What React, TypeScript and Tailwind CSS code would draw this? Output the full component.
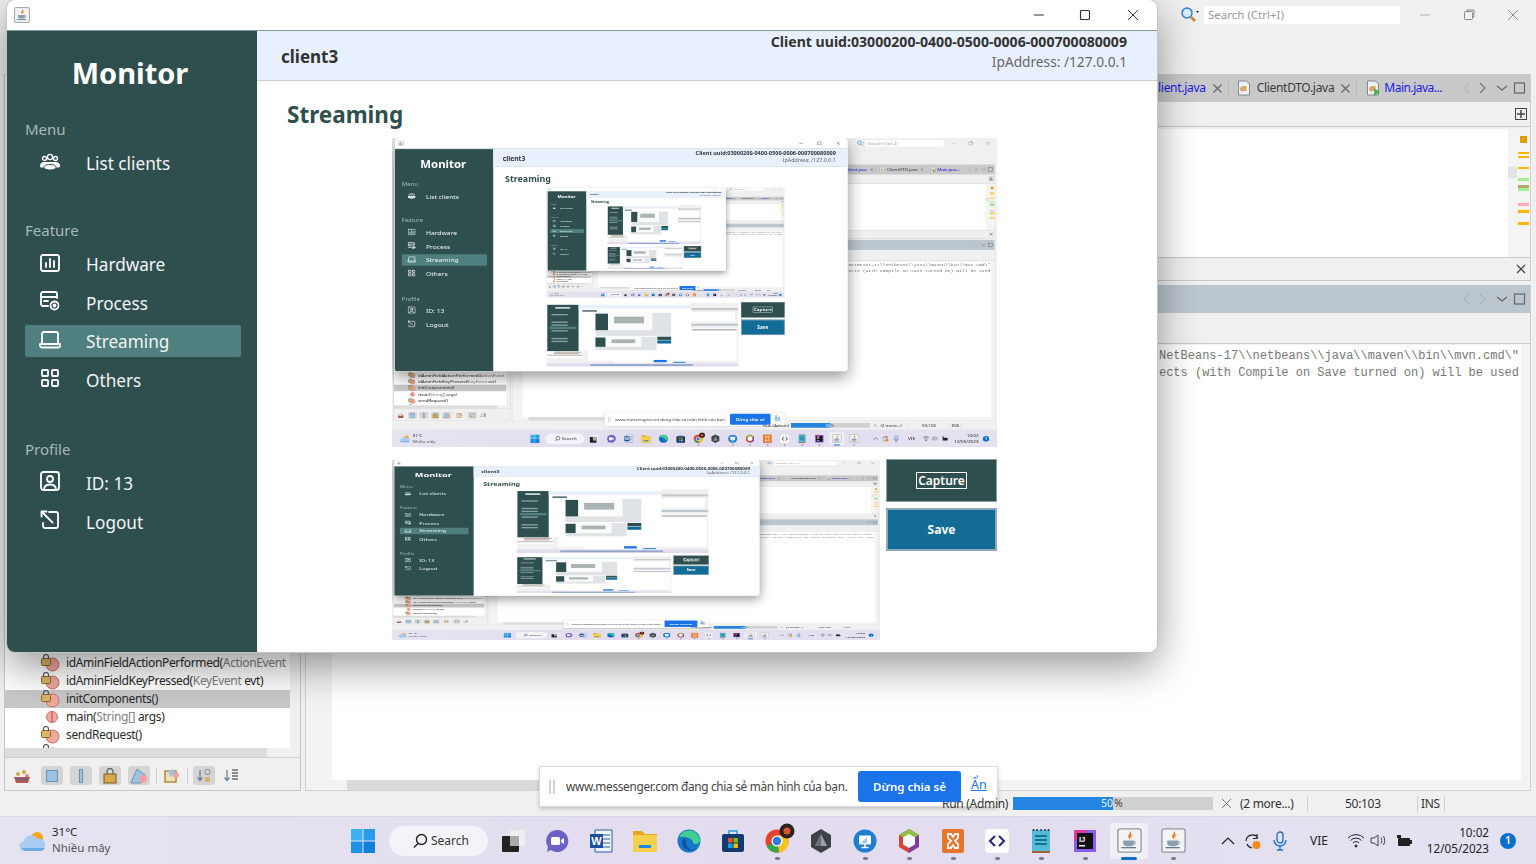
import React from "react";

const MIN_TEXT_SCALE = 0.1;

function JavaIcon({ size = 28 }: { size?: number }) {
  return (
    <svg width={size} height={size} viewBox="0 0 28 28">
      <rect x="1" y="1" width="26" height="26" rx="2.5" fill="#f3f3f3" stroke="#8e9aa3" strokeWidth="1.5" />
      <path d="M14 4c2 3-3 4-1 7 .5 1 1.500 1.500 1.500 1.500-1-2 3.500-3.500.5-8.500z" fill="#e8761e" />
      <path d="M17 7c0 2-2 3-1.500 5.500" stroke="#e8a03c" strokeWidth="1" fill="none" />
      <path d="M7 14h12v3.500c0 1.500-2 3-6 3s-6-1.500-6-3z" fill="#8aa0ae" />
      <path d="M19 15c2.500 0 2.500 3-1 3.500" stroke="#6f8794" strokeWidth="1" fill="none" />
      <path d="M5 22h16" stroke="#5b7b8f" strokeWidth="1.500" />
    </svg>
  );
}

function LockDot() {
  return (
    <svg width="20" height="18" viewBox="0 0 20 18" className="shrink-0">
      <circle cx="12.500" cy="10.500" r="6.500" fill="#f0a8a0" stroke="#cf6f68" />
      <rect x="1.500" y="4.500" width="9" height="7" rx="1" fill="#dcb56a" stroke="#8a6a2a" />
      <path d="M3.500 4.500V3a2.500 2.500 0 0 1 5 0v1.500" fill="none" stroke="#555" strokeWidth="1.200" />
    </svg>
  );
}

function MainDot() {
  return (
    <svg width="20" height="18" viewBox="0 0 20 18" className="shrink-0">
      <circle cx="12" cy="9" r="5.500" fill="#f0a8a0" stroke="#cf6f68" />
      <path d="M12 3.500v11" stroke="#c05850" strokeWidth="1.200" />
    </svg>
  );
}

function FileIcon({ run = false }: { run?: boolean }) {
  return (
    <svg width="16" height="16" viewBox="0 0 16 16" className="shrink-0">
      <path d="M2.500 1h8l3 3v11h-11z" fill="#eef1f4" stroke="#7d8791" />
      <circle cx="6.500" cy="9" r="2.500" fill="#e79a8f" />
      <rect x="6.500" y="6" width="4" height="5" fill="#d7ac5a" />
      {run && <path d="M9 8l6 4-6 4z" fill="#4fae4f" />}
    </svg>
  );
}

function TabX() {
  return (
    <svg width="9" height="9" viewBox="0 0 9 9" stroke="#666" strokeWidth="1.200" className="shrink-0">
      <path d="m.5.5 8 8M8.500.5l-8 8" />
    </svg>
  );
}

function Chevrons({ dim }: { dim: boolean }) {
  return (
    <svg width="72" height="16" viewBox="0 0 72 16" fill="none" strokeWidth="1.200">
      <path d="M9 3 4 8l5 5" stroke={dim ? "#aab4bd" : "#b4b4b4"} />
      <path d="M20 3l5 5-5 5" stroke={dim ? "#aab4bd" : "#777"} />
      <path d="m37 6 5 4 5-4" stroke="#666" />
      <rect x="54.500" y="3" width="10" height="10" stroke="#666" />
    </svg>
  );
}

function Ide() {
  const rows: [React.ReactNode, string, string, string, boolean][] = [
    [<LockDot key="a" />, "idAminFieldActionPerformed(", "ActionEvent", "", false],
    [<LockDot key="b" />, "idAminFieldKeyPressed(", "KeyEvent", " evt)", false],
    [<LockDot key="c" />, "initComponents()", "", "", true],
    [<MainDot key="d" />, "main(", "String[]", " args)", false],
    [<LockDot key="e" />, "sendRequest()", "", "", false],
    [<LockDot key="f" />, "", "", "", false],
  ];
  return (
    <div className="flex-1 min-h-0 flex flex-col bg-[#f0f0f0]">
      <div className="h-[74px] shrink-0 flex justify-end items-start">
        <div className="mt-[6px] flex items-center">
          <svg width="20" height="18" viewBox="0 0 20 18" fill="none">
            <circle cx="7" cy="7" r="5" fill="#d8ecff" stroke="#2f80d0" strokeWidth="1.500" />
            <path d="m11 11 4 4" stroke="#d08820" strokeWidth="2.500" />
            <path d="m16 5 3 0-1.500 2z" fill="#222" />
          </svg>
          <div className="ml-[4px] w-[196px] h-[18px] bg-white pl-[4px] text-[11.500px] leading-[18px] text-[#9a9a9a]">Search (Ctrl+I)</div>
        </div>
        <div className="w-[136px] pt-[8px] flex">
          <svg className="ml-[18px]" width="14" height="14" viewBox="0 0 14 14" stroke="#b0b0b0" fill="none"><path d="M2 7h10" /></svg>
          <svg className="ml-[30px]" width="14" height="14" viewBox="0 0 14 14" stroke="#888" fill="none"><rect x="2.500" y="3.500" width="8" height="8" rx="1" /><path d="M5 3.500V2h7v7h-1.500" /></svg>
          <svg className="ml-[30px]" width="14" height="14" viewBox="0 0 14 14" stroke="#888" fill="none"><path d="m2 2 10 10M12 2 2 12" /></svg>
        </div>
      </div>
      <div className="flex-1 min-h-0 flex pl-[4px] pr-[5px]">
        <div className="w-[297px] shrink-0 border border-[#c8c8c8] flex flex-col min-h-0">
          <div className="flex-1 min-h-0 overflow-hidden bg-white pt-[579px] mr-[10px] text-[12px] tracking-[-0.35px] text-[#2b2b2b]">
            {rows.map((r, i) => (
              <div key={i} className={`h-[18px] flex items-center pl-[35px] gap-[6px] whitespace-nowrap ${r[4] ? "bg-[#c8c8c8]" : ""}`}>
                {r[0]}
                {r[1] && <span>{r[1]}<span className="text-[#808080]">{r[2]}</span>{r[3]}</span>}
              </div>
            ))}
          </div>
          <div className="h-[9px] shrink-0 bg-[#f0f0f0]"><div className="h-full w-[262px] bg-[#dcdcdc]" /></div>
          <div className="h-[33px] shrink-0 border-t border-[#d0d0d0] flex items-center pl-[8px] pt-[3px] bg-[#f0f0f0]">
            <svg width="18" height="18" viewBox="0 0 18 18"><circle cx="5" cy="7" r="2" fill="#d9a74a" /><circle cx="11" cy="5" r="2" fill="#d9a74a" /><circle cx="14" cy="9" r="2" fill="#e08a80" /><path d="M1 10h16l-2 6H3z" fill="#b25a50" /><path d="M3 12h12" stroke="#3b6ea8" /></svg>
            <div className="ml-[10px] w-[22px] h-[19px] bg-[#d4d4d4] rounded-[3px] flex items-center justify-center"><div className="w-[12px] h-[12px] bg-[#9cc4e6] border border-[#6a8fb0]" /></div>
            <div className="ml-[7px] w-[22px] h-[19px] bg-[#d4d4d4] rounded-[3px] flex items-center justify-center"><div className="w-[4px] h-[14px] bg-[#9cc4e6] border border-[#6a8fb0]" /></div>
            <div className="ml-[7px] w-[22px] h-[19px] bg-[#d4d4d4] rounded-[3px] flex items-center justify-center">
              <svg width="16" height="16" viewBox="0 0 16 16"><rect x="2" y="6" width="12" height="9" fill="#d9a74a" stroke="#7a5a20" /><path d="M5 6V3.500a3 3 0 0 1 6 0V6" fill="none" stroke="#666" strokeWidth="1.300" /></svg>
            </div>
            <div className="ml-[7px] w-[22px] h-[19px] bg-[#d4d4d4] rounded-[3px] flex items-center justify-center">
              <svg width="18" height="16" viewBox="0 0 18 16"><path d="M7 1 15 7l-4 8H1z" fill="#9cc4e6" stroke="#6a8fb0" /><circle cx="13" cy="11" r="4" fill="#f0a0a0" /></svg>
            </div>
            <div className="ml-[6px] w-px h-[16px] bg-[#cfcfcf]" />
            <svg className="ml-[6px]" width="18" height="16" viewBox="0 0 18 16"><rect x="2" y="3" width="11" height="11" fill="#f0e0b0" stroke="#b08a3a" strokeWidth="1.500" /><path d="M5 3 10 1l3 5-6 3z" fill="#9cc4e6" /><circle cx="13" cy="7" r="3" fill="#f0a0a0" /></svg>
            <div className="ml-[6px] w-px h-[16px] bg-[#cfcfcf]" />
            <div className="ml-[5px] w-[22px] h-[19px] bg-[#d4d4d4] rounded-[3px] flex items-center justify-center">
              <svg width="16" height="16" viewBox="0 0 16 16" fill="none"><path d="M4 2v10M1.500 9.500 4 12.500l2.500-3" stroke="#6a8297" strokeWidth="1.300" /><rect x="9" y="1.500" width="5" height="5" rx="2" stroke="#7a8a98" /><rect x="9" y="9" width="5" height="5" fill="#d9b36a" /></svg>
            </div>
            <svg className="ml-[7px]" width="18" height="16" viewBox="0 0 18 16" fill="none"><path d="M5 2v10M2.500 9.500 5 12.500l2.500-3" stroke="#6a8297" strokeWidth="1.300" /><path d="M10 2h6M10 5h6M10 8h6M10 11h6" stroke="#8c8c8c" strokeWidth="2" /></svg>
          </div>
        </div>
        <div className="ml-[4px] flex-1 min-w-0 flex flex-col">
          <div className="shrink-0 border-x border-[#d0d0d0]">
            <div className="h-[28px] bg-[#c9c9c9] flex items-center justify-end text-[12px] tracking-[-0.3px] whitespace-nowrap">
              <span className="text-[#1a1ae8]">Client.java</span>
              <span className="ml-[7px] flex"><TabX /></span>
              <span className="ml-[6px] mr-[7px] w-px h-[20px] bg-[#bbbbbb]" />
              <FileIcon />
              <span className="ml-[5px] text-[#3a3a3a]">ClientDTO.java</span>
              <span className="ml-[7px] flex"><TabX /></span>
              <span className="ml-[6px] mr-[8px] w-px h-[20px] bg-[#bbbbbb]" />
              <FileIcon run />
              <span className="ml-[3px] text-[#1a1ae8] tracking-[-0.5px]">Main.java...</span>
              <span className="ml-[18px] -mr-[2px] flex"><Chevrons dim={false} /></span>
            </div>
            <div className="h-[25px] border-b border-[#c8c8c8] flex items-center justify-end pr-[3px]">
              <svg width="12" height="12" viewBox="0 0 12 12" fill="none" stroke="#444"><rect x=".5" y=".5" width="11" height="11" /><path d="M6 2v8M2 6h8" strokeWidth="1.500" /></svg>
            </div>
            <div className="h-[128px] mt-[2px] bg-[#f4f4f4] flex">
              <div className="flex-1 bg-white" />
              <div className="w-[22px] relative">
                <div className="absolute left-0 top-[38px] w-[9px] h-[11px] bg-[#e3e3e3]" />
                <div className="ml-[12px] mt-[7px] w-[7px] h-[7px] bg-[#e0a000]" />
                <div className="ml-[10px] mt-[9px] w-[11px] h-[2px] bg-[#ffb400]" />
                <div className="ml-[10px] mt-[2px] w-[11px] h-[2px] bg-[#ffb400]" />
                <div className="ml-[10px] mt-[9px] w-[11px] h-[2px] bg-[#ffb400]" />
                <div className="ml-[10px] mt-[9px] w-[11px] h-[3px] bg-[#a0f090]" />
                <div className="ml-[10px] mt-[4px] w-[11px] h-[3px] bg-[#b0a870]" />
                <div className="ml-[10px] w-[11px] h-[3px] bg-[#a0f090]" />
                <div className="ml-[10px] mt-[12px] w-[11px] h-[3px] bg-[#ffa8b8]" />
                <div className="ml-[10px] mt-[4px] w-[11px] h-[3px] bg-[#ffb400]" />
                <div className="ml-[10px] mt-[9px] w-[11px] h-[3px] bg-[#ffb400]" />
              </div>
            </div>
            <div className="h-[24px] border-y border-[#c8c8c8] flex items-center justify-end pr-[3px]">
              <svg width="12" height="12" viewBox="0 0 12 12" stroke="#444" strokeWidth="1.300"><path d="m2 2 8 8M10 2l-8 8" /></svg>
            </div>
          </div>
          <div className="mt-[4px] flex-1 min-h-0 flex flex-col border-x border-b border-[#d0d0d0]">
            <div className="h-[28px] shrink-0 bg-[#bcc6cf] flex items-center justify-end"><span className="-mr-[2px] flex"><Chevrons dim /></span></div>
            <div className="h-[31px] shrink-0 border-b border-[#c8c8c8]" />
            <div className="flex-1 min-h-0 pl-[26px] pr-[9px] bg-[#f3f3f3]">
              <div className="h-full mt-[1px] bg-white overflow-hidden flex flex-col items-end pt-[3px] pr-[2px] font-['Liberation_Mono',monospace] text-[12px] leading-[17px] text-[#777777] whitespace-pre">
                <div>{"C:\\\\Program Files\\\\NetBeans-17\\\\netbeans\\\\java\\\\maven\\\\bin\\\\mvn.cmd\\\""}</div>
                <div>{"for Maven projects (with Compile on Save turned on) will be used"}</div>
              </div>
            </div>
            <div className="h-[10px] shrink-0 flex bg-[#f3f3f3]">
              <div className="ml-[41px] w-[500px] bg-[#dadada]" />
            </div>
          </div>
        </div>
      </div>
      <div className="h-[25px] shrink-0 flex items-center text-[12px] text-[#333] whitespace-nowrap">
        <div className="w-[942px] shrink-0" />
        <div className="relative z-10 w-[66px] shrink-0 text-right tracking-[-0.3px]">Run (Admin)</div>
        <div className="ml-[5px] w-[200px] h-[13px] shrink-0 bg-[#d0d0d0] flex text-[10.500px] leading-[13px]">
          <div className="w-[100px] h-full bg-[#2585e0] text-right text-[#e8f2fc]">50</div>
          <div className="pl-[1px] text-[#444444]">%</div>
        </div>
        <svg className="ml-[9px]" width="9" height="9" viewBox="0 0 9 9" stroke="#777"><path d="m0 0 9 9M9 0 0 9" /></svg>
        <span className="ml-[9px] w-[54px] tracking-[-0.3px]">(2 more...)</span>
        <span className="ml-[13px] w-px h-[16px] bg-[#d0d0d0]" />
        <span className="ml-[37px] w-[35px] tracking-[-0.3px]">50:103</span>
        <span className="ml-[37px] w-px h-[16px] bg-[#d0d0d0]" />
        <span className="ml-[3px] w-[20px] tracking-[-0.3px]">INS</span>
        <span className="ml-[3px] w-px h-[16px] bg-[#d0d0d0]" />
      </div>
    </div>
  );
}

const Cell = ({ children, dot, active }: { children: React.ReactNode; dot?: boolean; active?: boolean }) => (
  <div className="w-[44px] h-[48px] shrink-0 flex flex-col items-center justify-center relative">
    {active && <div className="absolute left-[3px] right-[3px] top-[6px] bottom-[6px] bg-[#f0eef7] rounded-[4px]" />}
    <div className="relative flex">{children}</div>
    {dot && <div className="absolute bottom-[5px] w-[5px] h-[3px] rounded-full bg-[#7c7c84]" />}
    {active && <div className="absolute bottom-[5px] w-[16px] h-[3px] rounded-full bg-[#0a6fd0]" />}
  </div>
);

function Taskbar() {
  return (
    <div className="h-[48px] shrink-0 flex items-center bg-gradient-to-r from-[#e6e3f0] via-[#e2dcee] to-[#e4e2f1] border-t border-[#d8d6e2]">
      <div className="w-[341px] shrink-0 flex items-center pl-[19px]">
        <svg width="28" height="24" viewBox="0 0 28 24">
          <circle cx="18" cy="9" r="6" fill="#f5a623" />
          <path d="M6 22a5 5 0 0 1-1-10 7 7 0 0 1 13-2 6 6 0 0 1 4 12z" fill="#a9cdf2" />
          <path d="M6 22a4 4 0 0 1-3-3h23a5 5 0 0 1-4 3z" fill="#6fa8e6" />
        </svg>
        <div className="ml-[5px] text-[11.500px] leading-[16px] -mt-[1px]">
          <div className="text-[#222]">31°C</div>
          <div className="text-[#555]">Nhiều mây</div>
        </div>
      </div>
      <Cell>
        <svg width="24" height="24" viewBox="0 0 24 24"><rect x="0" y="0" width="11.500" height="11.500" fill="#3bb2f2" /><rect x="12.500" y="0" width="11.500" height="11.500" fill="#2a9be8" /><rect x="0" y="12.500" width="11.500" height="11.500" fill="#1e90e6" /><rect x="12.500" y="12.500" width="11.500" height="11.500" fill="#1080d8" /></svg>
      </Cell>
      <div className="ml-[4px] w-[99px] h-[30px] rounded-full bg-[#f5f3fa] flex items-center pl-[23px] text-[12px] text-[#333] shrink-0">
        <svg width="16" height="16" viewBox="0 0 16 16" fill="none" stroke="#222" strokeWidth="1.400"><circle cx="9.500" cy="6.500" r="5" /><path d="m6 10.500-4 4" /></svg>
        <span className="ml-[3px]">Search</span>
      </div>
      <div className="ml-[3px] flex">
        <Cell>
          <svg width="24" height="24" viewBox="0 0 24 24"><rect x="9" y="1" width="15" height="16" rx="1" fill="#eeeeee" /><rect x="1" y="7" width="17" height="16" rx="1" fill="#222" /><rect x="9" y="7" width="9" height="10" fill="#aaaaaa" /></svg>
        </Cell>
        <Cell>
          <svg width="24" height="24" viewBox="0 0 24 24"><path d="M12 1a11 11 0 1 1-6 20l-4 2 1-5A11 11 0 0 1 12 1z" fill="#6b62c6" /><rect x="6" y="8" width="9" height="8" rx="1.500" fill="#fff" /><path d="m16 11 3-2v6l-3-2z" fill="#fff" /></svg>
        </Cell>
        <Cell>
          <svg width="24" height="24" viewBox="0 0 24 24"><path d="M6 1h17v22H6z" fill="#eef3fb" stroke="#2b5fa8" /><path d="M14 6h7M14 10h7M14 14h7M14 18h7" stroke="#2b5fa8" /><rect x="1" y="5" width="13" height="14" fill="#1c4f9c" /><text x="7.500" y="16" fontSize="11" fontWeight="700" fill="#fff" textAnchor="middle" fontFamily="Liberation Sans">W</text></svg>
        </Cell>
        <Cell>
          <svg width="24" height="24" viewBox="0 0 24 24"><path d="M0 2h9l3 3h12v18H0z" fill="#e5a71f" /><rect x="0" y="6" width="24" height="17" fill="#f6d04d" /><rect x="6" y="16" width="12" height="3" fill="#1e88e5" /></svg>
        </Cell>
        <Cell>
          <svg width="24" height="24" viewBox="0 0 24 24"><circle cx="12" cy="12" r="11.500" fill="#1578c9" /><path d="M2 8a11 11 0 0 1 21 3c0 4-5 5-7 3 1-5-9-7-14-6z" fill="#3fcf8e" /><path d="M9 14c0 5 5 8 10 6-5 3-13 1-14-6 0-2 1-4 4-5-1 2 0 3 0 5z" fill="#0b4f9e" /></svg>
        </Cell>
        <Cell>
          <svg width="24" height="24" viewBox="0 0 24 24" fill="none"><path d="M8 5V2h8v3" stroke="#22a3e0" strokeWidth="1.500" /><rect x="1" y="5" width="22" height="18" rx="2" fill="#13396e" /><rect x="7" y="9" width="4.500" height="4.500" fill="#f25022" /><rect x="12.500" y="9" width="4.500" height="4.500" fill="#7fba00" /><rect x="7" y="14.500" width="4.500" height="4.500" fill="#00a4ef" /><rect x="12.500" y="14.500" width="4.500" height="4.500" fill="#ffb900" /></svg>
        </Cell>
        <Cell dot>
          <svg width="30" height="30" viewBox="0 0 30 30" className="-mt-[5px] ml-[5px] -mr-[1px]"><g transform="translate(0 6)"><circle cx="12" cy="12" r="11.500" fill="#e5432f" /><path d="M12 12 1.700 17a11.500 11.500 0 0 0 12 6.500z" fill="#2fa84f" /><path d="M12 6.500h10.500a11.500 11.500 0 0 1-8.500 17z" fill="#f8c31e" /><circle cx="12" cy="12" r="5.500" fill="#fff" /><circle cx="12" cy="12" r="4.200" fill="#2f78e0" /></g><circle cx="22" cy="8" r="7.500" fill="#2b2320" /><circle cx="22" cy="8" r="3.500" fill="#d8552a" /></svg>
        </Cell>
        <Cell>
          <svg width="24" height="26" viewBox="0 0 24 26"><path d="M12 1 22 7v12l-10 6-10-6V7z" fill="#3e4247" /><path d="M12 6 18 18H6z" fill="#9aa0a6" /><path d="M12 6v12H6z" fill="#6a7076" /></svg>
        </Cell>
        <Cell dot>
          <svg width="24" height="24" viewBox="0 0 24 24" fill="none"><circle cx="12" cy="12" r="11.500" fill="#1e7fd0" /><rect x="6" y="6.500" width="12" height="9" rx="1" fill="#fff" /><path d="M12 15.500v3M8.500 18.500h7" stroke="#fff" strokeWidth="1.500" /><path d="M8 14l6-6v6z" fill="#9ccbf0" /></svg>
        </Cell>
        <Cell dot>
          <svg width="24" height="26" viewBox="0 0 24 26"><path d="M12 1 22 7v12l-10 6z" fill="#7d3f98" /><path d="M12 1 2 7v12l10 6z" fill="#d8433b" /><path d="M12 1 22 7l-10 6L2 7z" fill="#8fbf3f" /><path d="M12 6l6 3.500v7L12 20l-6-3.500v-7z" fill="#fff" /></svg>
        </Cell>
        <Cell dot>
          <svg width="24" height="26" viewBox="0 0 24 26" fill="none"><rect x="1" y="1" width="22" height="24" rx="2" fill="#e9752b" /><path d="M7 6h3l2 3 2-3h3v4l-3 3 3 3v4h-3l-2-3-2 3H7v-4l3-3-3-3z" stroke="#fff" strokeWidth="1.800" /></svg>
        </Cell>
        <Cell dot>
          <svg width="24" height="24" viewBox="0 0 24 24" fill="none"><rect x="0" y="0" width="24" height="24" rx="4" fill="#fff" /><path d="M10 7 5 12l5 5M14 7l5 5-5 5" stroke="#2b2f7f" strokeWidth="2.200" /></svg>
        </Cell>
        <Cell dot>
          <svg width="20" height="26" viewBox="0 0 20 26" fill="none"><rect x="1" y="2" width="18" height="22" fill="#50bcd8" /><rect x="1" y="23" width="18" height="2" fill="#a8602e" /><path d="M2.500 1v2M6 1v2M10 1v2M14 1v2M17.500 1v2" stroke="#333" strokeWidth="1.500" /><path d="M4 8h12M4 12h12M4 16h12" stroke="#0e5a7a" strokeWidth="1.500" /></svg>
        </Cell>
        <Cell dot>
          <svg width="22" height="22" viewBox="0 0 22 22"><rect width="22" height="22" fill="#8a5cf0" /><path d="M0 0h14L0 12z" fill="#e0389a" /><rect x="3" y="3" width="16" height="16" fill="#111" /><text x="5" y="12" fontSize="7.500" fontWeight="700" fill="#fff" fontFamily="Liberation Sans">IJ</text><rect x="5" y="15" width="6" height="1.500" fill="#fff" /></svg>
        </Cell>
        <Cell active>
          <JavaIcon size={25} />
        </Cell>
        <Cell dot>
          <JavaIcon size={25} />
        </Cell>
      </div>
      <div className="ml-[26px] flex items-center text-[#222]">
        <svg width="14" height="10" viewBox="0 0 14 10" fill="none" stroke="#222" strokeWidth="1.200"><path d="m1 8 6-6 6 6" /></svg>
        <svg className="ml-[9px]" width="18" height="18" viewBox="0 0 18 18" fill="none"><path d="M2 9a6.500 6.500 0 0 1 12-3M13 2v4.500H9M3 12a6.500 6.500 0 0 0 5 4" stroke="#222" strokeWidth="1.100" /><circle cx="12.500" cy="13" r="4" fill="#f28c1c" /></svg>
        <svg className="ml-[11px]" width="14" height="20" viewBox="0 0 14 20" fill="none" stroke="#1c6fc4" strokeWidth="1.300"><rect x="4" y="1" width="6" height="11" rx="3" /><path d="M1 9a6 6 0 0 0 12 0M7 15v4M4 19h6" /></svg>
        <span className="ml-[23px] text-[12px] w-[24px]">VIE</span>
        <svg className="ml-[13px]" width="18" height="15" viewBox="0 0 18 15" fill="none" stroke="#222" strokeWidth="1"><path d="M1 5a11 11 0 0 1 16 0M3.500 7.500a7.500 7.500 0 0 1 11 0M6 10a4 4 0 0 1 6 0" /><circle cx="9" cy="13" r="1" fill="#222" /></svg>
        <svg className="ml-[5px]" width="16" height="15" viewBox="0 0 16 15" fill="none" stroke="#444" strokeWidth="1"><path d="M1 5h3l4-3v11l-4-3H1zM11 4.500c1 2 1 4 0 6M13.500 3c1.500 3 1.500 6 0 9" /></svg>
        <svg className="ml-[10px]" width="17" height="14" viewBox="0 0 17 14"><rect x="2" y="4" width="12" height="8" rx="1" fill="#222" /><rect x="14" y="6" width="2" height="4" fill="#222" /><path d="M1 1h4v3H1z" fill="#222" /></svg>
        <div className="ml-[13px] w-[63px] -mt-[2px] text-right text-[11.700px] leading-[16px]">
          <div>10:02</div>
          <div className="whitespace-nowrap">12/05/2023</div>
        </div>
        <div className="ml-[11px] w-[16px] h-[16px] rounded-full bg-[#0a6fd0] text-white text-[10.500px] font-semibold flex items-center justify-center">1</div>
      </div>
    </div>
  );
}

/* The smallest generations of the captured screen are only a smudge of colour: a plain drawing. */
function Thumbnail() {
  return (
    <svg className="w-full h-full block" viewBox="0 0 1536 864" preserveAspectRatio="none">
      <rect width="1536" height="864" fill="#f0f0f0" />
      <rect x="332" y="345" width="1190" height="436" fill="#ffffff" />
      <rect x="1160" y="355" width="360" height="22" fill="#bdbdbd" />
      <rect x="5" y="652" width="285" height="95" fill="#ffffff" />
      <rect x="60" y="660" width="220" height="14" fill="#b8a49c" />
      <rect x="60" y="680" width="200" height="14" fill="#b8a49c" />
      <rect x="5" y="700" width="285" height="18" fill="#c8c8c8" />
      <rect x="1157" y="74" width="374" height="28" fill="#c9c9c9" />
      <rect x="1157" y="128" width="350" height="129" fill="#ffffff" />
      <rect x="1157" y="285" width="374" height="28" fill="#bcc6cf" />
      <rect y="816" width="1536" height="48" fill="#e2dcee" />
      <rect x="350" y="828" width="820" height="24" fill="#4a78b0" opacity="0.55" />
      <rect x="539" y="766" width="459" height="41" fill="#ffffff" />
      <rect x="858" y="771" width="103" height="31" fill="#1a73e8" />
      <rect x="1013" y="797" width="100" height="13" fill="#2585e0" />
      <rect x="7" y="0" width="1150" height="652" fill="#ffffff" />
      <rect x="7" y="31" width="250" height="621" fill="#2f4f4f" />
      <rect x="25" y="325" width="216" height="32" fill="#4f7f7f" />
      <rect x="70" y="60" width="120" height="24" fill="#c8d4d4" />
      <rect x="40" y="155" width="130" height="18" fill="#8aa0a0" />
      <rect x="40" y="256" width="130" height="18" fill="#8aa0a0" />
      <rect x="40" y="295" width="130" height="18" fill="#8aa0a0" />
      <rect x="40" y="372" width="130" height="18" fill="#8aa0a0" />
      <rect x="40" y="475" width="130" height="18" fill="#8aa0a0" />
      <rect x="40" y="513" width="130" height="18" fill="#8aa0a0" />
      <rect x="257" y="31" width="900" height="50" fill="#e8f0fe" />
      <rect x="287" y="102" width="116" height="22" fill="#5a7676" />
      <rect x="392" y="138" width="605" height="309" fill="#dfe3e6" />
      <rect x="392" y="138" width="455" height="233" fill="#fbfbfb" />
      <rect x="392" y="150" width="100" height="221" fill="#2f4f4f" />
      <rect x="540" y="190" width="240" height="90" fill="#a8b4b4" />
      <rect x="392" y="460" width="488" height="180" fill="#dfe3e6" />
      <rect x="392" y="460" width="367" height="135" fill="#fbfbfb" />
      <rect x="392" y="470" width="80" height="125" fill="#2f4f4f" />
      <rect x="520" y="495" width="190" height="50" fill="#a8b4b4" />
      <rect x="886" y="459" width="111" height="43" fill="#2f4f4f" />
      <rect x="886" y="508" width="111" height="43" fill="#136c96" />
    </svg>
  );
}

function Preview({ scaleY, big }: { scaleY: number; big: boolean }) {
  const next = scaleY * (big ? 0.3576 : 0.2083);
  return (
    <div className={`shrink-0 overflow-hidden relative ${big ? "w-[605px] h-[309px]" : "w-[488px] h-[180px]"} ${scaleY === 1 ? "blur-[0.45px]" : ""}`}>
      {next >= MIN_TEXT_SCALE ? (
        <div className={`absolute left-0 top-0 w-[1536px] h-[864px] origin-top-left ${big ? "[transform:scale(0.3939,0.3576)]" : "[transform:scale(0.3177,0.2083)]"}`}>
          <Screen scaleY={next} />
        </div>
      ) : (
        <Thumbnail />
      )}
    </div>
  );
}

type Item = { label: string; icon: React.ReactNode; active?: boolean };

const stroke = { fill: "none", stroke: "#fff", strokeWidth: 1.800, strokeLinecap: "round", strokeLinejoin: "round" } as const;

const icons = {
  users: (
    <svg width="20" height="18" viewBox="0 0 20 18" fill="#fff">
      <circle cx="10" cy="4" r="2.600" stroke="#fff" fill="none" strokeWidth="1.400" />
      <circle cx="4.500" cy="5.500" r="2" stroke="#fff" fill="none" strokeWidth="1.300" />
      <circle cx="15.500" cy="5.500" r="2" stroke="#fff" fill="none" strokeWidth="1.300" />
      <path d="M0 13c0-3 2-4 4-4h12c2 0 4 1 4 4 0 1-1 1.500-2 1.500H2c-1 0-2-.5-2-1.500z" />
      <path d="M4 14.500c0-2 2-3 6-3s6 1 6 3c0 1.500-3 2.500-6 2.500s-6-1-6-2.500z" stroke="#2f4f4f" strokeWidth="1" />
    </svg>
  ),
  hardware: (
    <svg width="20" height="18" viewBox="0 0 20 18" {...stroke}>
      <rect x="1" y="1" width="18" height="16" rx="2" />
      <path d="M6 13V9M10 13V5M14 13V7" />
    </svg>
  ),
  process: (
    <svg width="20" height="20" viewBox="0 0 20 20" {...stroke}>
      <path d="M8 15H3a2 2 0 0 1-2-2V3a2 2 0 0 1 2-2h12a2 2 0 0 1 2 2v4M1 6h16M4 10h4" />
      <circle cx="14.500" cy="14.500" r="4" />
      <circle cx="14.500" cy="14.500" r="1" fill="#fff" />
    </svg>
  ),
  laptop: (
    <svg width="22" height="18" viewBox="0 0 22 18" {...stroke}>
      <path d="M3 12V3a2 2 0 0 1 2-2h12a2 2 0 0 1 2 2v9" />
      <path d="M1 13h20v1.500a2 2 0 0 1-2 2H3a2 2 0 0 1-2-2z" />
    </svg>
  ),
  grid: (
    <svg width="20" height="20" viewBox="0 0 20 20" {...stroke}>
      <rect x="2" y="2" width="6" height="6" rx=".8" />
      <rect x="12" y="2" width="6" height="6" rx=".8" />
      <rect x="2" y="12" width="6" height="6" rx=".8" />
      <rect x="12" y="12" width="6" height="6" rx=".8" />
    </svg>
  ),
  id: (
    <svg width="20" height="20" viewBox="0 0 20 20" {...stroke}>
      <rect x="1" y="1" width="18" height="18" rx="2.500" />
      <circle cx="10" cy="8" r="3" />
      <path d="M4 19c0-4 3-5.500 6-5.500s6 1.500 6 5.500" />
    </svg>
  ),
  logout: (
    <svg width="20" height="20" viewBox="0 0 20 20" {...stroke}>
      <path d="M9 2h7a2 2 0 0 1 2 2v12a2 2 0 0 1-2 2H5a2 2 0 0 1-2-2v-3" />
      <path d="M1.500 1.500l11 11M1.500 1.500H6.500M1.500 1.500V6.500" />
    </svg>
  ),
};

function Section({ label, items, className }: { label: string; items: Item[]; className: string }) {
  return (
    <div className={`${className} ml-[18px] mr-[16px]`}>
      <div className="h-[20px] text-[15px] leading-[20px] text-[#a7b8b8]">{label}</div>
      <div className="mt-[8px] flex flex-col gap-[6.670px]">
        {items.map((it) => (
          <div key={it.label} className={`h-[32px] flex items-center rounded-[2px] text-[17.200px] text-[#f2f5f5] ${it.active ? "bg-[#4f7f7f]" : ""}`}>
            <div className="w-[50px] flex justify-center -mt-[3px] shrink-0">{it.icon}</div>
            <span className="ml-[11px] mt-[2px]">{it.label}</span>
          </div>
        ))}
      </div>
    </div>
  );
}

function MonitorWindow({ scaleY }: { scaleY: number }) {
  return (
    <div className="absolute left-[7px] top-0 w-[1150px] h-[652px] bg-white rounded-[8px] overflow-hidden flex flex-col shadow-[0_14px_42px_rgba(0,0,0,0.42)] ring-1 ring-[#c4c4c4]">
      <div className="h-[31px] shrink-0 flex items-center border-b border-[#7f9a9a]">
        <div className="ml-[7px] flex"><JavaIcon size={16} /></div>
        <div className="flex-1" />
        <svg width="12" height="12" viewBox="0 0 12 12" stroke="#333"><path d="M1 6h10" /></svg>
        <svg className="ml-[34px]" width="12" height="12" viewBox="0 0 12 12" stroke="#333" fill="none" strokeWidth="1.200"><rect x="1.500" y="1.500" width="9" height="9" rx="1" /></svg>
        <svg className="ml-[36px] mr-[18px]" width="12" height="12" viewBox="0 0 12 12" stroke="#333"><path d="m1 1 10 10M11 1 1 11" /></svg>
      </div>
      <div className="flex-1 min-h-0 flex">
        <aside className="w-[250px] shrink-0 bg-[#2f4f4f] flex flex-col">
          <div className="mt-[21px] h-[42px] pr-[4px] text-center text-white text-[29px] leading-[42px] font-bold">Monitor</div>
          <Section className="mt-[25px]" label="Menu" items={[{ label: "List clients", icon: icons.users }]} />
          <Section
            className="mt-[41px]"
            label="Feature"
            items={[
              { label: "Hardware", icon: icons.hardware },
              { label: "Process", icon: icons.process },
              { label: "Streaming", icon: icons.laptop, active: true },
              { label: "Others", icon: icons.grid },
            ]}
          />
          <Section
            className="mt-[43px]"
            label="Profile"
            items={[
              { label: "ID: 13", icon: icons.id },
              { label: "Logout", icon: icons.logout },
            ]}
          />
        </aside>
        <main className="flex-1 min-w-0 flex flex-col">
          <header className="h-[50px] shrink-0 bg-[#e8f0fe] border-b border-[#cccccc] flex items-center justify-between pl-[24px] pr-[30px]">
            <div className="mt-[3px] text-[17px] font-bold text-[#333333]">client3</div>
            <div className="text-right mb-[8px]">
              <div className="text-[14.100px] leading-[20px] font-bold text-[#333333]">Client uuid:03000200-0400-0500-0006-000700080009</div>
              <div className="text-[13.700px] leading-[20px] text-[#666666]">IpAddress: /127.0.0.1</div>
            </div>
          </header>
          <h1 className="mt-[17px] ml-[30px] h-[33px] text-[22.500px] leading-[33px] font-bold text-[#2f4f4f]">Streaming</h1>
          <div className="mt-[7px] ml-[135px]">
            <Preview scaleY={scaleY} big />
            <div className="mt-[13px] flex">
              <Preview scaleY={scaleY} big={false} />
              <div className="ml-[6px] -mt-[1px] w-[111px] flex flex-col gap-[6px]">
                <div className="h-[43px] bg-[#2f4f4f] border border-[#8aa0a8] flex items-center justify-center">
                  <span className="border border-white px-px text-[12px] leading-[15px] font-semibold text-white">Capture</span>
                </div>
                <div className="h-[43px] bg-[#136c96] border-[2px] border-[#8fa8bc] flex items-center justify-center text-[12px] font-bold text-white">Save</div>
              </div>
            </div>
          </div>
        </main>
      </div>
    </div>
  );
}

function Screen({ scaleY }: { scaleY: number }) {
  return (
    <div className="relative w-[1536px] h-[864px] overflow-hidden flex flex-col bg-[#f0f0f0] font-['Noto_Sans',sans-serif]">
      <Ide />
      <Taskbar />
      <MonitorWindow scaleY={scaleY} />
      <div className="absolute left-[539px] top-[766px] w-[459px] h-[41px] bg-white border border-[#dcdcdc] shadow-[0_2px_4px_rgba(0,0,0,0.2)] flex items-center whitespace-nowrap">
        <div className="ml-[9px] w-[6px] h-[14px] border-x-[2px] border-[#d0d0d0]" />
        <span className="ml-[11px] text-[11.800px] tracking-[-0.3px] text-[#444444]">www.messenger.com đang chia sẻ màn hình của bạn.</span>
        <div className="absolute z-20 left-[318px] top-[4px] w-[103px] h-[31px] rounded-[3px] bg-[#1a73e8] flex items-center justify-center text-[11.500px] font-semibold text-white">Dừng chia sẻ</div>
        <span className="absolute left-[431px] top-[9px] text-[12.500px] text-[#1a73e8] underline">Ẩn</span>
      </div>
    </div>
  );
}

export default function App() {
  return <Screen scaleY={1} />;
}
